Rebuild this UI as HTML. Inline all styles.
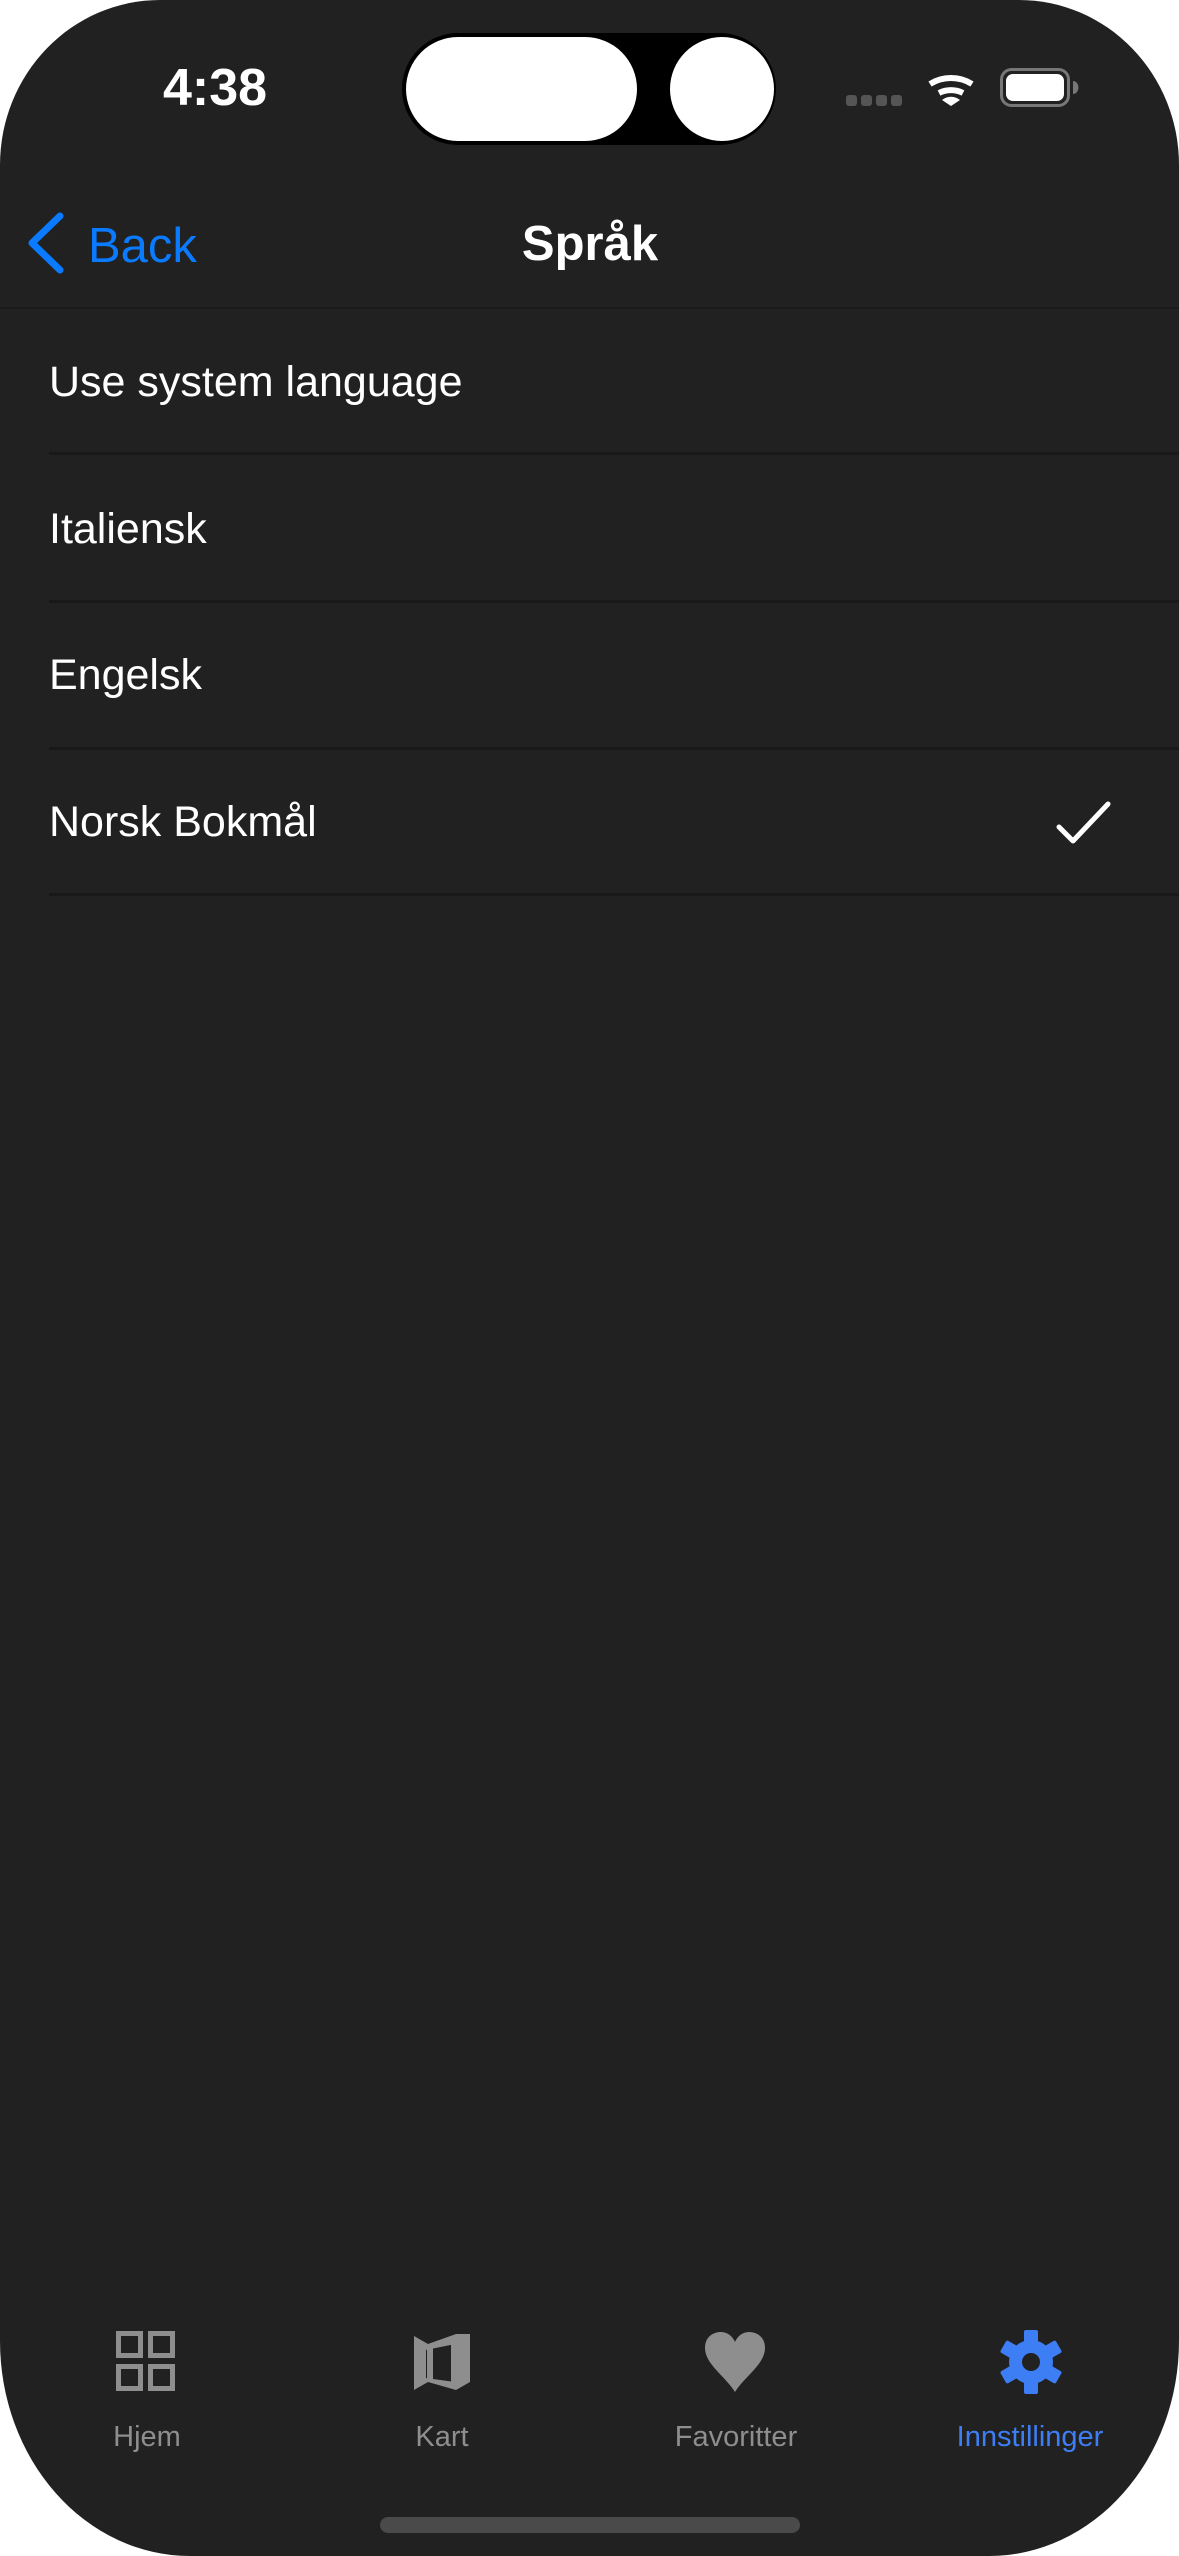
<!DOCTYPE html>
<html><head><meta charset="utf-8"><style>
*{margin:0;padding:0;box-sizing:border-box}
html,body{width:1179px;height:2556px;background:#fff;overflow:hidden}
body{font-family:"Liberation Sans",sans-serif;position:relative}
.screen{position:absolute;left:0;top:0;width:1179px;height:2556px;background:#212121;border-radius:160px 160px 190px 190px/165px 165px 215px 215px}
.abs{position:absolute}
.row{position:absolute;left:49px;color:#fff;font-size:43px;line-height:50px}
.sep{position:absolute;left:49px;right:0;height:3px;background:#191919}
.lbl{position:absolute;top:2421px;font-size:29px;color:#8e8e8e;width:300px;text-align:center;margin-left:-150px}
</style></head><body>
<div class="screen">
  <div class="abs" style="left:130px;top:58px;width:170px;text-align:center;color:#fff;font-weight:bold;font-size:52px;line-height:60px">4:38</div>
  <div class="abs" style="left:402px;top:33px;width:374px;height:112px;background:#000;border-radius:56px"></div>
  <div class="abs" style="left:406px;top:37px;width:231px;height:104px;background:#fff;border-radius:52px"></div>
  <div class="abs" style="left:670px;top:37px;width:104px;height:104px;background:#fff;border-radius:52px"></div>
  <svg class="abs" style="left:840px;top:60px" width="250" height="60" viewBox="840 60 250 60">
    <g fill="#555"><rect x="846" y="95" width="11" height="11" rx="3"/><rect x="861" y="95" width="11" height="11" rx="3"/><rect x="876" y="95" width="11" height="11" rx="3"/><rect x="891" y="95" width="11" height="11" rx="3"/></g>
    <g fill="none" stroke="#fff" stroke-width="6" stroke-linecap="butt">
      <path d="M930 84 A40 40 0 0 1 972 84"/>
      <path d="M939 93 A27 27 0 0 1 963 93"/>
    </g>
    <path d="M942 100 L951 106 L960 100 A14 14 0 0 0 942 100Z" fill="#fff"/>
    <rect x="1001.5" y="69.5" width="67" height="36" rx="10" fill="none" stroke="#777" stroke-width="3"/>
    <rect x="1006" y="74" width="58" height="27" rx="7" fill="#fff"/>
    <path d="M1073 81 a5 6 0 0 1 0 13z" fill="#777"/>
  </svg>
  <svg class="abs" style="left:24px;top:212px" width="44" height="62"><path d="M36 4 L8 31 L36 58" fill="none" stroke="#0a7aff" stroke-width="7" stroke-linecap="round" stroke-linejoin="round"/></svg>
  <div class="abs" style="left:88px;top:218px;color:#0a7aff;font-size:49px;line-height:56px">Back</div>
  <div class="abs" style="left:390px;top:216px;width:400px;text-align:center;color:#fff;font-weight:bold;font-size:49px;line-height:56px">Språk</div>
  <div class="abs" style="left:0;right:0;top:307px;height:2px;background:#1b1b1b"></div>

  <div class="row" style="top:357px">Use system language</div>
  <div class="sep" style="top:452px"></div>
  <div class="row" style="top:504px">Italiensk</div>
  <div class="sep" style="top:600px"></div>
  <div class="row" style="top:650px">Engelsk</div>
  <div class="sep" style="top:747px"></div>
  <div class="row" style="top:797px">Norsk Bokmål</div>
  <div class="sep" style="top:893px"></div>
  <svg class="abs" style="left:1052px;top:798px" width="64" height="50"><path d="M7 29 L21 43 L56 6" fill="none" stroke="#fff" stroke-width="5" stroke-linecap="round" stroke-linejoin="round"/></svg>

  <svg class="abs" style="left:115px;top:2330px" width="64" height="64">
    <g fill="none" stroke="#8e8e8e" stroke-width="5"><rect x="3.5" y="3.5" width="22" height="22"/><rect x="35.5" y="3.5" width="22" height="22"/><rect x="3.5" y="36.5" width="22" height="22"/><rect x="35.5" y="36.5" width="22" height="22"/></g>
  </svg>
  <svg class="abs" style="left:410px;top:2330px" width="64" height="64">
    <path d="M4 6 L18 14 L46 4 L60 4 L60 52 L46 60 L18 52 L4 60 Z M16 20 L16 48 L46 52 L46 14 Z" fill="#8e8e8e" fill-rule="evenodd"/>
    <path d="M16 20 L46 14 L46 52 L16 48Z" fill="#212121"/>
    <path d="M20 14 L20 50 M44 8 L44 56" stroke="#8e8e8e" stroke-width="6"/>
  </svg>
  <svg class="abs" style="left:703px;top:2330px" width="64" height="64">
    <path d="M32 62 C22 46 2 34 2 18 C2 7 10 2 18 2 C25 2 30 7 32 12 C34 7 39 2 46 2 C54 2 62 7 62 18 C62 34 42 46 32 62Z" fill="#8e8e8e"/>
  </svg>
  <svg class="abs" style="left:997px;top:2328px" width="68" height="68" viewBox="-34 -34 68 68">
    <g fill="#3d7ef5">
      <circle r="22"/>
      <rect x="-7" y="-32" width="14" height="64" rx="2"/>
      <rect x="-7" y="-32" width="14" height="64" rx="2" transform="rotate(60)"/>
      <rect x="-7" y="-32" width="14" height="64" rx="2" transform="rotate(120)"/>
    </g>
    <circle r="9" fill="#212121"/>
  </svg>
  <div class="lbl" style="left:147px">Hjem</div>
  <div class="lbl" style="left:442px">Kart</div>
  <div class="lbl" style="left:736px">Favoritter</div>
  <div class="lbl" style="left:1030px;color:#3d7ef5">Innstillinger</div>
  <div class="abs" style="left:380px;top:2517px;width:420px;height:16px;border-radius:8px;background:#4a4a4a"></div>
</div>
</body></html>
